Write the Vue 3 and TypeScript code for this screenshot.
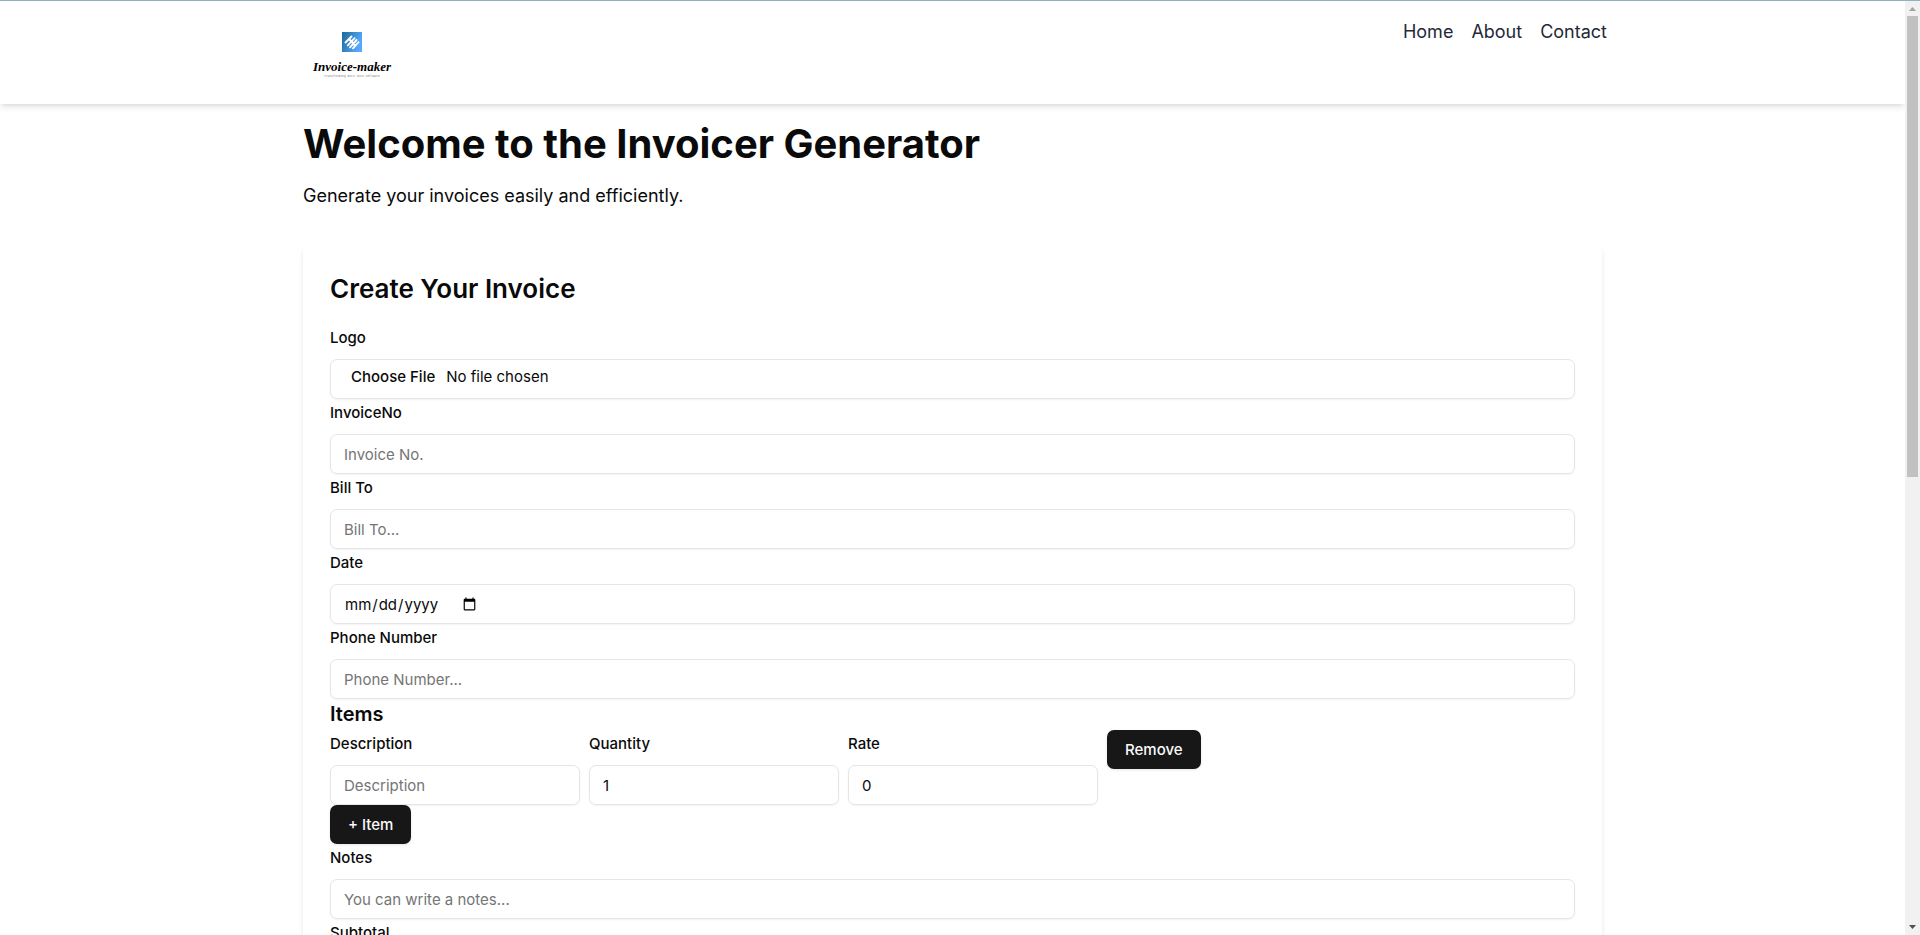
<script setup lang="ts">
import { ref } from 'vue'

interface Item {
  description: string
  quantity: number
  rate: number
}

const navLinks = ['Home', 'About', 'Contact']
const items = ref<Item[]>([{ description: '', quantity: 1, rate: 0 }])

function addItem(): void {
  items.value.push({ description: '', quantity: 1, rate: 0 })
}

function removeItem(index: number): void {
  items.value.splice(index, 1)
}
</script>

<template>
  <div class="window">
    <div class="page">
      <header class="site-header">
        <div class="header-inner">
          <a href="#" class="brand" aria-label="Invoice-maker">
            <svg class="brand-logo" viewBox="0 0 98 67" aria-hidden="true">
              <defs>
                <linearGradient id="mark" x1="0" y1="0" x2="1" y2="0.4">
                  <stop offset="0" stop-color="#1b6a96" />
                  <stop offset="1" stop-color="#55a8ff" />
                </linearGradient>
              </defs>
              <rect x="38" y="13" width="20" height="20" fill="url(#mark)" />
              <g transform="translate(38 13)" stroke="#fff" stroke-width="1.9" stroke-linecap="round" fill="none">
                <path d="M3.500 10.500L9.500 4.500M5.800 13.400L12.600 6.200M8 15.400L14.600 8M11 16.300L16.600 10.200M7.500 7.500L12.800 13" />
              </g>
              <text x="48" y="52" text-anchor="middle" class="brand-name">Invoice-maker</text>
              <text x="48" y="58" text-anchor="middle" class="brand-tag">Transforming Bits into Software</text>
            </svg>
          </a>
          <nav class="nav">
            <a v-for="link in navLinks" :key="link" href="#">{{ link }}</a>
          </nav>
        </div>
      </header>

      <main class="content">
        <h1>Welcome to the Invoicer Generator</h1>
        <p class="lead">Generate your invoices easily and efficiently.</p>

        <form class="card" @submit.prevent>
          <h2>Create Your Invoice</h2>
          <div class="field">
            <label for="logo">Logo</label>
            <input id="logo" type="file" class="control" />
          </div>
          <div class="field">
            <label for="invoice-no">InvoiceNo</label>
            <input id="invoice-no" type="text" class="control" placeholder="Invoice No." />
          </div>
          <div class="field">
            <label for="bill-to">Bill To</label>
            <input id="bill-to" type="text" class="control" placeholder="Bill To..." />
          </div>
          <div class="field">
            <label for="date">Date</label>
            <input id="date" type="date" class="control" />
          </div>
          <div class="field">
            <label for="phone">Phone Number</label>
            <input id="phone" type="tel" class="control" placeholder="Phone Number..." />
          </div>

          <h3>Items</h3>
          <div v-for="(item, i) in items" :key="i" class="item-row">
            <div class="field">
              <label :for="`description-${i}`">Description</label>
              <input :id="`description-${i}`" v-model="item.description" type="text" class="control" placeholder="Description" />
            </div>
            <div class="field">
              <label :for="`quantity-${i}`">Quantity</label>
              <input :id="`quantity-${i}`" v-model="item.quantity" type="number" class="control" />
            </div>
            <div class="field">
              <label :for="`rate-${i}`">Rate</label>
              <input :id="`rate-${i}`" v-model="item.rate" type="number" class="control" />
            </div>
            <button type="button" class="btn" @click="removeItem(i)">Remove</button>
          </div>
          <button type="button" class="btn" @click="addItem">+ Item</button>

          <div class="field">
            <label for="notes">Notes</label>
            <input id="notes" type="text" class="control" placeholder="You can write a notes..." />
          </div>
          <div class="field">
            <label for="subtotal">Subtotal</label>
            <input id="subtotal" type="number" class="control" />
          </div>
        </form>
      </main>
    </div>

    <div class="scrollbar" aria-hidden="true">
      <svg class="arrow" viewBox="0 0 15 15"><path d="M4 10h7L7.500 6z" fill="#a3a3a3" /></svg>
      <div class="track"><div class="thumb"></div></div>
      <svg class="arrow" viewBox="0 0 15 15"><path d="M4 5h7L7.500 9z" fill="#505050" /></svg>
    </div>
  </div>
</template>

<style>
body {
  margin: 0;
  background: #fff;
}
</style>

<style scoped>
* {
  box-sizing: border-box;
}

.window {
  display: flex;
  height: 100vh;
  overflow: hidden;
  border-top: 1px solid #8fb3b8;
  font-family: Inter, sans-serif;
  font-size: 15px;
  color: #0a0a0a;
}

.page {
  flex: 1;
  min-width: 0;
  overflow-y: auto;
  scrollbar-width: none;
}

.site-header {
  padding: 18px 0;
  box-shadow: 0 4px 7px -1px rgb(0 0 0 / 0.1), 0 2px 4px -2px rgb(0 0 0 / 0.1);
}

.header-inner {
  display: flex;
  justify-content: space-between;
  align-items: flex-start;
  max-width: 1309px;
  margin: 0 auto;
  padding-left: 6px;
}

.brand {
  display: block;
}

.brand-logo {
  display: block;
  width: 98px;
  height: 67px;
}

.brand-name {
  font: italic bold 13px "Liberation Serif", serif;
}

.brand-tag {
  font: 3px "Liberation Mono", monospace;
  fill: #777;
}

.nav {
  display: flex;
  gap: 18px;
  font-size: 18px;
  line-height: 26px;
}

.nav a {
  color: #1f2937;
  text-decoration: none;
}

.content {
  max-width: 1299px;
  margin: 0 auto;
  padding-top: 18px;
}

h1,
h2,
h3,
p {
  margin: 0;
}

h1 {
  font-size: 40px;
  line-height: 44px;
  font-weight: 700;
}

.lead {
  margin-top: 16px;
  font-size: 18px;
  line-height: 27px;
}

.card {
  margin-top: 35px;
  padding: 27px;
  border-radius: 9px;
  box-shadow: 0 4px 7px -1px rgb(0 0 0 / 0.1), 0 2px 4px -2px rgb(0 0 0 / 0.1);
}

h2 {
  margin-bottom: 18px;
  font-size: 26px;
  line-height: 35px;
  font-weight: 600;
}

h3 {
  font-size: 20px;
  line-height: 31px;
  font-weight: 600;
}

label {
  display: block;
  margin-bottom: 8px;
  line-height: 27px;
  font-weight: 500;
}

.control {
  display: flex;
  width: 100%;
  height: 40px;
  margin: 0;
  padding: 4px 13px;
  border: 1px solid #e5e5e5;
  border-radius: 7px;
  background: transparent;
  box-shadow: 0 1px 2px rgb(0 0 0 / 0.05);
  font: inherit;
  color: inherit;
}

.control[type='file'] {
  padding-top: 6px;
}

.control::placeholder {
  color: #757575;
}

.control::file-selector-button {
  padding: 1px 7px;
  border: 0;
  background: transparent;
  font: inherit;
  font-weight: 500;
  color: inherit;
}

.control[type='number'] {
  appearance: textfield;
}

.item-row {
  display: flex;
  align-items: flex-start;
  gap: 9px;
}

.item-row .field {
  width: 250px;
}

.btn {
  display: block;
  height: 39px;
  padding: 0 18px;
  border: 0;
  border-radius: 7px;
  background: #171717;
  box-shadow: 0 1px 3px rgb(0 0 0 / 0.1);
  font: inherit;
  font-weight: 500;
  color: #fafafa;
}

.scrollbar {
  display: flex;
  flex-direction: column;
  width: 15px;
  background: #f1f1f1;
}

.arrow {
  display: block;
  width: 15px;
  height: 15px;
}

.track {
  flex: 1;
  padding: 0 2px;
}

.thumb {
  height: 51%;
  background: #c1c1c1;
}
</style>
